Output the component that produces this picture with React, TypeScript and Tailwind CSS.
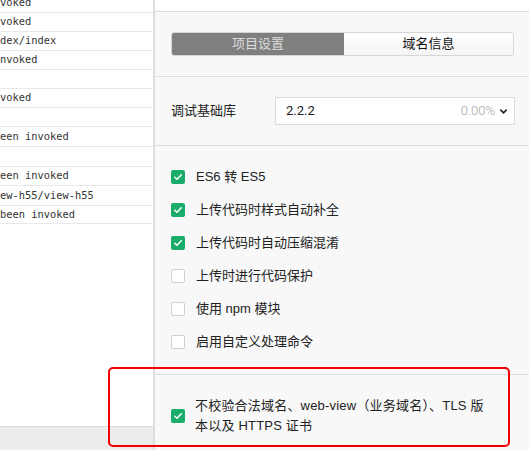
import React from "react";

const rows: { t: string; h: number }[] = [
  { t: "voked", h: 19 },
  { t: "voked", h: 19 },
  { t: "dex/index", h: 19 },
  { t: "nvoked", h: 19 },
  { t: "", h: 19 },
  { t: "voked", h: 19 },
  { t: "", h: 19 },
  { t: "een invoked", h: 20 },
  { t: "", h: 20 },
  { t: "een invoked", h: 19 },
  { t: "ew-h55/view-h55", h: 20 },
  { t: "been invoked", h: 18 },
];

const options: { label: string; checked: boolean }[] = [
  { label: "ES6 转 ES5", checked: true },
  { label: "上传代码时样式自动补全", checked: true },
  { label: "上传代码时自动压缩混淆", checked: true },
  { label: "上传时进行代码保护", checked: false },
  { label: "使用 npm 模块", checked: false },
  { label: "启用自定义处理命令", checked: false },
];

function Box({ checked }: { checked: boolean }) {
  if (checked) {
    return (
      <div className="w-[14px] h-[14px] rounded-[2px] bg-[#1aad6a] flex items-center justify-center shrink-0">
        <svg width="10" height="10" viewBox="0 0 10 10">
          <path d="M1.8 5.2 L4 7.3 L8.3 2.8" fill="none" stroke="#fff" strokeWidth="1.5" strokeLinecap="round" strokeLinejoin="round" />
        </svg>
      </div>
    );
  }
  return <div className="w-[14px] h-[14px] rounded-[2px] bg-white border border-[#d0d0d0] shrink-0" />;
}

export default function App() {
  const sans = { fontFamily: '"Liberation Sans", "Noto Sans CJK SC", sans-serif' };
  return (
    <div className="relative w-[529px] h-[450px] overflow-hidden flex bg-white" style={sans}>
      {/* left console */}
      <div className="w-[153px] h-full flex flex-col bg-white shrink-0">
        <div className="flex-1 overflow-hidden">
          <div className="-mt-[6px]">
            {rows.map((r, i) => (
              <div
                key={i}
                className="border-b border-[#e8e8e8] flex items-center text-[10.4px] text-[#333] whitespace-nowrap overflow-hidden"
                style={{ height: r.h, fontFamily: '"DejaVu Sans Mono", monospace' }}
              >
                {r.t}
              </div>
            ))}
          </div>
        </div>
        <div className="h-[24px] bg-[#ececec] border-t border-[#dcdcdc]" />
      </div>
      <div className="w-[2px] h-full bg-[#dedede] shrink-0" />
      {/* right settings */}
      <div className="flex-1 h-full bg-[#f8f8f8] flex flex-col text-[13px] text-[#222]">
        <div className="h-[12px] bg-white border-b border-[#dddddd]" />
        <div className="h-[65px] border-b border-[#dddddd] px-[16px] pt-[20px]">
          <div className="flex h-[24px] w-[343px] rounded-[3px] overflow-hidden border border-[#d6d6d6]">
            <div className="w-[172px] bg-[#808080] text-[#dcdcdc] flex items-center justify-center">项目设置</div>
            <div className="flex-1 bg-gradient-to-b from-white to-[#f4f4f4] text-[#111] flex items-center justify-center">域名信息</div>
          </div>
        </div>
        <div className="h-[69px] border-b border-[#dddddd] px-[16px] pt-[20px] flex items-start">
          <div className="w-[104px] h-[28px] flex items-center text-[#222]">调试基础库</div>
          <div className="w-[240px] h-[28px] bg-white border border-[#dcdcdc] flex items-center pl-[10px] pr-[6px]">
            <span className="flex-1 text-[#222]" style={{ fontFamily: 'Roboto, "Liberation Sans", sans-serif' }}>2.2.2</span>
            <span className="text-[#a6a6a6] font-light" style={{ fontFamily: 'Roboto, "Liberation Sans", sans-serif' }}>0.00%</span>
            <svg className="ml-[4px]" width="9" height="9" viewBox="0 0 10 10">
              <path d="M2 3.5 L5 6.5 L8 3.5" fill="none" stroke="#222" strokeWidth="1.8" strokeLinecap="round" strokeLinejoin="round" />
            </svg>
          </div>
        </div>
        <div className="h-[229px] border-b border-[#dddddd] px-[16px] pt-[14px]">
          {options.map((o, i) => (
            <div key={i} className="h-[33px] flex items-center gap-[11px]">
              <Box checked={o.checked} />
              <span>{o.label}</span>
            </div>
          ))}
        </div>
        <div className="flex-1 px-[16px] pt-[21px] flex items-start gap-[10px]">
          <div className="mt-[13px]">
            <Box checked={true} />
          </div>
          <div className="leading-[20px] tracking-[0.2px]">
            <div>不校验合法域名、web-view（业务域名）、TLS 版</div>
            <div>本以及 HTTPS 证书</div>
          </div>
        </div>
      </div>
      {/* red annotation */}
      <div className="absolute left-[108px] top-[367px] w-[402px] h-[80px] border-[2.5px] border-[#f20000] rounded-[5px] pointer-events-none" />
    </div>
  );
}
